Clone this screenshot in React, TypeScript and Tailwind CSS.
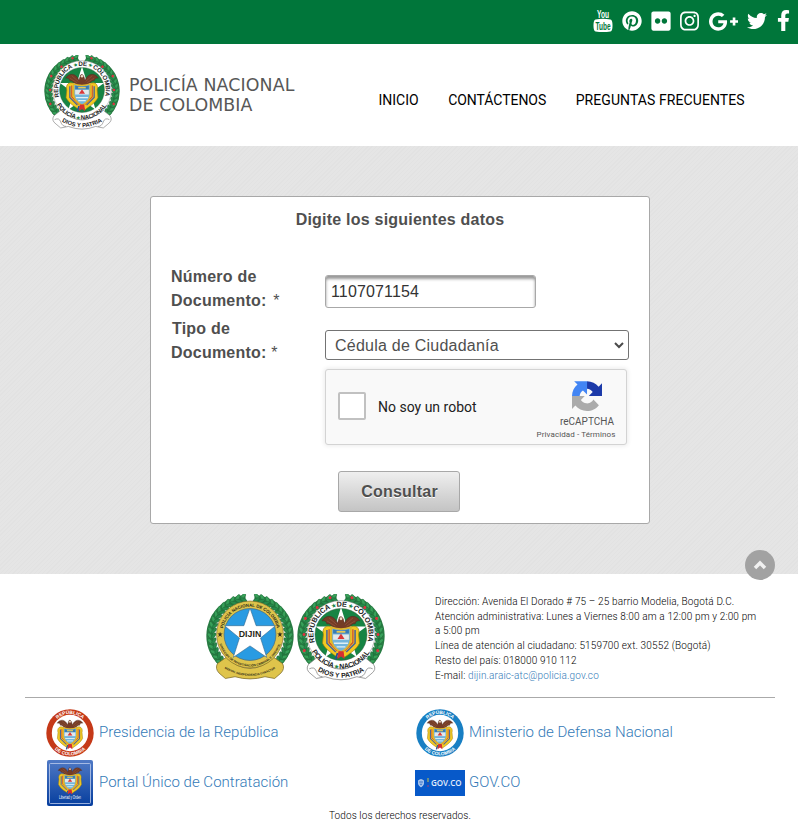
import React from 'react';
import { FaPinterest, FaFlickr, FaInstagram, FaTwitter, FaFacebookF } from 'react-icons/fa';

const deg = Math.PI / 180;

/* Condor, flags and shield, drawn around (0,0) in a 60-unit box */
function CoatOfArms() {
  return (
    <g>
      <g transform="translate(0 -1) scale(.8 .85)">
        <path d="M-5 -14C-10 -25 -21 -26 -27 -17C-23 -18 -21 -16 -20 -13C-16 -14 -15 -11 -12 -9L-5 -5H5L12 -9C15 -11 16 -14 20 -13C21 -16 23 -18 27 -17C21 -26 10 -25 5 -14L3 -20C1 -24 -3 -23 -3 -20Z" fill="#743c26" stroke="#4b2a20" strokeWidth=".7" />
        <path d="M-20 -17L-8 -10M-17 -21L-6 -12M20 -17L8 -10M17 -21L6 -12" stroke="#95583f" strokeWidth="1" />
        <circle cx="0" cy="-20" r="2" fill="#f1ddc8" />
      </g>
      <path d="M-10 -8C-17 -12 -22 -7 -20 0L-21 10C-17 18 -9 22 -4 26L0 20L-9 12Z" fill="#f2c922" stroke="#9f7d0c" strokeWidth=".8" />
      <path d="M10 -8C17 -12 22 -7 20 0L21 10C17 18 9 22 4 26L0 20L9 12Z" fill="#f2c922" stroke="#9f7d0c" strokeWidth=".8" />
      <path d="M-16 -5L-16 10L-6 20M16 -5L16 10L6 20" fill="none" stroke="#46609b" strokeWidth="1.7" />
      <path d="M-13.500 -6L-13.500 9L-4 19M13.500 -6L13.500 9L4 19" fill="none" stroke="#cc4a32" strokeWidth="1.4" />
      <path d="M-11 -8Q0 -4 11 -8V6Q10 15 0 20Q-10 15 -11 6Z" fill="#73b5dc" stroke="#dfb52b" strokeWidth="2" />
      <path d="M-9 -6Q0 -3 9 -6V-1H-9Z" fill="#387bb5" />
      <path d="M-5 -3H5" stroke="#e5ca5a" strokeWidth="2" />
      <path d="M-9 0H9V6H-9Z" fill="#e3e9ea" />
      <path d="M-4 5L0 -1L4 5Z" fill="#d9373a" />
      <path d="M-8 10L8 10M-5 14H5" stroke="#dff0f5" strokeWidth="1.5" />
      <path d="M-3 19L-4 28L0 25L4 28L3 19Z" fill="#d52f31" />
      <path d="M-4 21L-6 28" stroke="#234da0" strokeWidth="2" />
    </g>
  );
}

function Wreath({ berries }: { berries: boolean }) {
  const angles = Array.from({ length: 19 }, (_, i) => 8 + i * 8);
  return (
    <g>
      {[-1, 1].map((side) => (
        <g key={side}>
          <path d={side < 0 ? 'M45 5A42.5 42.5 0 0 0 27 85' : 'M55 5A42.5 42.5 0 0 1 73 85'} fill="none" stroke="#2a7d45" strokeWidth="8" />
          {angles.map((a, i) => {
            const x = 50 + side * Math.sin(a * deg) * 43.5;
            const y = 47.5 - Math.cos(a * deg) * 43.5;
            return (
              <g key={a} transform={`translate(${x} ${y}) rotate(${side * a})`}>
                <ellipse cx="0" cy="-2.5" rx="4.2" ry="1.9" transform={`rotate(${side * 42})`} fill="#38a15a" stroke="#1b6232" strokeWidth=".5" />
                <ellipse cx="0" cy="2.5" rx="4" ry="1.8" transform={`rotate(${side * -35})`} fill="#278a4b" stroke="#1b6232" strokeWidth=".5" />
                {berries && i % 3 === 1 && <circle r="1.7" fill="#df3140" cy={i % 2 ? -1.5 : 1.5} />}
              </g>
            );
          })}
        </g>
      ))}
    </g>
  );
}

function PoliceSeal({ id, className }: { id: string; className: string }) {
  return (
    <svg viewBox="0 0 100 100" className={className} role="img">
      <Wreath berries />
      <path d="M13 80L23 72Q50 99 77 72L87 80Q91 86 84 91L78 96L68 94Q50 101 32 94L22 96L16 91Q9 86 13 80Z" fill="#fff" stroke="#777" strokeWidth=".8" />
      <path d="M14 85Q20 82 22 88T29 94M86 85Q80 82 78 88T71 94" fill="none" stroke="#777" strokeWidth=".8" />
      <circle cx="50" cy="46" r="38.5" fill="#fff" stroke="#8a8a8a" strokeWidth=".6" />
      <circle cx="50" cy="46" r="29.5" fill="#168443" stroke="#315b3d" strokeWidth=".6" />
      <path d="M50 15L56.8 37L79 37L61 50L68 72L50 59L32 72L39 50L21 37L43.2 37Z" fill="#fff" />
      <g transform="translate(50 46)"><CoatOfArms /></g>
      <path id={`${id}-top`} d="M20.5 56A31.3 31.3 0 1 1 79.5 56" fill="none" />
      <path id={`${id}-bottom`} d="M14 59A38 38 0 0 0 86 59" fill="none" />
      <path id={`${id}-motto`} d="M21 86Q50 104 79 86" fill="none" />
      <g fontFamily="Liberation Sans, sans-serif" fontWeight="bold" fill="#222">
        <text fontSize="8.2" textLength="116"><textPath href={`#${id}-top`} startOffset="1">REPÚBLICA<tspan fill="#168443" fontSize="6"> ★ </tspan>DE<tspan fill="#168443" fontSize="6"> ★ </tspan>COLOMBIA</textPath></text>
        <text fontSize="8" textLength="79"><textPath href={`#${id}-bottom`} startOffset="7">POLICÍA<tspan fill="#168443" fontSize="6"> ★ </tspan>NACIONAL</textPath></text>
        <text fontSize="7.8"><textPath href={`#${id}-motto`} startOffset="50%" textAnchor="middle">DIOS Y PATRIA</textPath></text>
      </g>
    </svg>
  );
}

function DijinSeal() {
  return (
    <svg viewBox="0 0 100 100" className="h-[88px] w-[88px]" role="img">
      <Wreath berries={false} />
      <path d="M13 79L23 72Q50 97 77 72L87 79Q90 85 85 90L78 96L67 94Q50 99 33 94L22 96L15 90Q10 85 13 79Z" fill="#dfc44b" stroke="#74621f" strokeWidth=".8" />
      <circle cx="50" cy="46" r="38" fill="#dfc44b" stroke="#766525" strokeWidth=".7" />
      <circle cx="50" cy="46" r="29.5" fill="#299be2" stroke="#4e6a76" strokeWidth=".8" />
      <path d="M50 16L57 36L79 36L62 50L69 72L50 59L31 72L38 50L21 36L43 36Z" fill="#fff" stroke="#35698e" strokeWidth=".7" />
      <path id="dijin-top" d="M18.5 46A31.5 31.5 0 0 1 81.5 46" fill="none" />
      <path id="dijin-bottom" d="M14.6 54A36.3 36.3 0 0 0 85.4 54" fill="none" />
      <path id="dijin-motto" d="M20 84Q50 102 80 84" fill="none" />
      <g fontFamily="Liberation Sans, sans-serif" fontWeight="bold" fill="#292816">
        <text x="50" y="48.5" textAnchor="middle" fontSize="10">DIJIN</text>
        <text fontSize="5"><textPath href="#dijin-top" startOffset="50%" textAnchor="middle">POLICÍA NACIONAL DE COLOMBIA</textPath></text>
        <text fontSize="3.4"><textPath href="#dijin-bottom" startOffset="50%" textAnchor="middle">DIRECCIÓN DE INVESTIGACIÓN CRIMINAL E INTERPOL</textPath></text>
        <text fontSize="3.3"><textPath href="#dijin-motto" startOffset="50%" textAnchor="middle">MENTAL INDEPENDENCIA CARÁCTER</textPath></text>
      </g>
      <path d="M13 45h6l-5 4 2-6 2 6zM81 45h6l-5 4 2-6 2 6z" fill="#29251a" />
    </svg>
  );
}

function RepublicSeal({ color, id }: { color: string; id: string }) {
  return (
    <svg viewBox="0 0 48 48" className="h-12 w-12" role="img">
      <circle cx="24" cy="24" r="23.7" fill={color} />
      <circle cx="24" cy="24" r="18.2" fill="#fff" />
      <g transform="translate(24 23.5) scale(.6)"><CoatOfArms /></g>
      <path id={`${id}-a`} d="M5 24A19 19 0 0 1 43 24" fill="none" />
      <path id={`${id}-b`} d="M1.6 24A22.4 22.4 0 0 0 46.4 24" fill="none" />
      <g fill="white" fontFamily="Liberation Sans, sans-serif" fontWeight="bold" fontSize="4.8">
        <text><textPath href={`#${id}-a`} startOffset="50%" textAnchor="middle">REPÚBLICA</textPath></text>
        <text><textPath href={`#${id}-b`} startOffset="50%" textAnchor="middle">DE COLOMBIA</textPath></text>
      </g>
    </svg>
  );
}

function ContractLogo() {
  return (
    <svg viewBox="0 0 46 46" className="h-[46px] w-[46px]" role="img">
      <defs><linearGradient id="contract" x2="0" y2="1"><stop stopColor="#4f79c5" /><stop offset="1" stopColor="#063e9e" /></linearGradient></defs>
      <rect width="46" height="46" rx="2" fill="url(#contract)" />
      <rect x="2.5" y="3.5" width="41" height="40" rx="1" fill="none" stroke="#bdccec" strokeWidth=".8" />
      <g transform="translate(23 19) scale(.55)"><CoatOfArms /></g>
      <text x="12" y="38.5" fill="#fff" fontFamily="Liberation Sans, sans-serif" fontSize="4.6" textLength="22" lengthAdjust="spacingAndGlyphs">Libertad y Orden</text>
    </svg>
  );
}

function GovLogo() {
  return (
    <svg viewBox="0 0 50 26" className="h-[26px] w-[50px]" role="img">
      <path d="M0 0H50V26H0Z" fill="#0759c9" />
      <path d="M3.5 10.5Q6 8.5 8.5 10.5V14Q8 16 6 17Q4 16 3.5 14Z" fill="#9bbbe9" stroke="#d9e7fa" strokeWidth=".6" />
      <path d="M4.3 12h3.6M5 14.3h2" stroke="#2868c1" strokeWidth=".8" />
      <path d="M13 8v4" stroke="#c7c34c" />
      <path d="M13 12v2" stroke="#264eaa" />
      <path d="M13 15v2" stroke="#b53e6e" />
      <text x="16" y="16" fill="#e3edfc" fontFamily="Open Sans, sans-serif" fontWeight="600" fontSize="8" textLength="30.5">GOV.CO</text>
    </svg>
  );
}

function YouTubeIcon() {
  return (
    <svg viewBox="0 -3 20 29" className="-mt-[3px] mr-[9px] h-[29px] w-5 shrink-0 overflow-visible" role="img">
      <path d="M2.5 10.5Q10 9 17.5 10.5Q19.5 11 19.5 16.5Q19.5 22 17.5 22.5Q10 23.6 2.5 22.5Q.5 22 .5 16.5Q.5 11 2.5 10.5Z" fill="#fff" />
      <g fontFamily="Liberation Sans, sans-serif" fontWeight="bold">
        <text x="4" y="8.5" fontSize="10.5" fill="#fff" textLength="12" lengthAdjust="spacingAndGlyphs">You</text>
        <text x="2.5" y="20.5" fontSize="10.5" fill="#00763a" textLength="15" lengthAdjust="spacingAndGlyphs">Tube</text>
      </g>
    </svg>
  );
}

function GooglePlusIcon() {
  return (
    <svg viewBox="0 164 2304 1466" className="mt-[3px] mr-[9px] ml-px h-[19px] w-[29px] shrink-0" fill="currentColor" role="img">
      <path d="M1437 913q0 208-87 370.500T1102 1538 733 1630q-149 0-285-58T214 1416 58 1182 0 897 58 612 214 378 448 222 733 164q286 0 491 192L1025 547Q908 434 733 434q-123 0-227.500 62T340 664.500 279 897t61 232.500T505.500 1298 733 1360q83 0 152.500-23t114.500-57.500 78.500-78.500 49-83 21.500-74H733V792h692q12 63 12 121zm867-121v210h-209v209h-210v-209h-209V792h209V583h210v209h209z" />
    </svg>
  );
}

function CaptchaLogo() {
  return (
    <svg viewBox="0 0 64 70" className="h-[33px] w-[30px]" role="img">
      <path d="M64 31.955a33 33 0 0 0-.033-1.37V4.687l-7.16 7.16C50.948 4.674 42.033.093 32.05.093V16.350c5.200.300 9.600 3.140 12.100 7.124l-8.307 8.481H64" fill="#1c3aa9" />
      <path d="M32.050.094H4.594l7.160 7.160C4.580 13.147 0 22.060 0 32.046H16.260c.300-5.200 3.140-9.600 7.124-12l8.666 8.307V.095" fill="#4285f4" />
      <path d="M.001 32.045v27.268l7.160-7.160c5.860 7.173 14.774 11.754 24.760 11.754 10.400 0 19.622-4.960 25.458-12.640l-11.736-11.860a15.550 15.550 0 0 1-4.754 5.334c-2.050 1.600-4.952 2.906-8.968 2.906-.485 0-.860-.057-1.135-.163-4.976-.393-9.288-3.140-11.828-7.124l8.307-8.307-27.297.001" fill="#ababab" />
    </svg>
  );
}

export default function App() {
  return (
    <div className="h-[833px] w-[798px] overflow-hidden bg-white font-['Roboto',sans-serif] text-black">
      <div className="flex h-11 items-start bg-[#00763a] pt-[9px] pl-[593px] text-white">
        <YouTubeIcon />
        <FaPinterest className="mt-[2px] mr-[9px] h-5 w-5 shrink-0" />
        <FaFlickr className="mt-[1px] mr-[9px] h-[22px] w-5 shrink-0" />
        <FaInstagram className="mt-[1px] mr-[9px] h-[22px] w-[19px] shrink-0" />
        <GooglePlusIcon />
        <FaTwitter className="mt-[2px] mr-[10px] h-5 w-5 shrink-0" />
        <FaFacebookF className="mt-[1px] h-[21px] w-[13px] shrink-0" />
      </div>
      <header className="flex h-[102px]">
        <PoliceSeal id="header" className="mt-[11px] ml-11 h-[76px] w-[76px] shrink-0" />
        <div className="mt-[31px] ml-[9px] w-[249.5px] shrink-0 font-['DejaVu_Sans',sans-serif] text-[17.4px] leading-[20px] tracking-[0.1px] text-[#575757]">
          <div className="whitespace-nowrap">POLICÍA NACIONAL</div>
          <div className="whitespace-nowrap">DE COLOMBIA</div>
        </div>
        <nav className="mt-[46px] flex items-start gap-[29.5px] text-sm leading-5 whitespace-nowrap">
          <a>INICIO</a><a className="tracking-[-0.05px]">CONTÁCTENOS</a><a className="tracking-[0.08px]">PREGUNTAS FRECUENTES</a>
        </nav>
      </header>
      <main className="relative h-[428px] bg-[repeating-linear-gradient(135deg,#e5e5e5_0px,#e5e5e5_2px,#e2e2e2_2px,#e2e2e2_3px)] pt-[50px] pl-[150px]">
        <form className="h-[328px] w-[500px] rounded-[3px] border border-[#a8a8a8] bg-white font-['Liberation_Sans',Arial,sans-serif] text-base text-[#4f4f4f]">
          <h1 className="mt-[11px] h-[57px] text-center leading-6 font-bold tracking-[0.22px]">Digite los siguientes datos</h1>
          <div className="flex h-[60px] pl-5">
            <label className="w-[154px] leading-6 font-bold tracking-[0.22px]">Número de<br />Documento: <span className="ml-[2px] font-normal">*</span></label>
            <input defaultValue="1107071154" className="mt-[10px] h-[33px] w-[211px] rounded-[3px] border border-[#a8a8a8] bg-white px-[5px] pt-px tracking-[0.15px] text-[#333] shadow-[inset_0_3px_3px_#999] outline-none" />
          </div>
          <div className="flex h-[44px] pl-5">
            <label className="-mt-[8px] w-[154px] leading-6 font-bold tracking-[0.22px]"><span className="pl-px">Tipo de</span><br />Documento: <span className="font-normal">*</span></label>
            <div className="mt-[5px] flex h-[30px] w-[304px] items-center justify-between rounded-[3px] border border-[#737373] pr-1 pl-[9px]">
              <span className="pt-px text-base tracking-[0.23px]">Cédula de Ciudadanía</span>
              <svg width="10" height="7" viewBox="0 0 10 7"><path d="M1 1l4 4 4-4" fill="none" stroke="#4b4b4b" strokeWidth="2" /></svg>
            </div>
          </div>
          <div className="ml-[174px] flex h-[76px] w-[302px] rounded-[3px] border border-[#d3d3d3] bg-[#f9f9f9] font-['Roboto',sans-serif] shadow-[0_0_4px_1px_rgba(0,0,0,.08)]">
            <div className="mt-[22px] ml-3 h-7 w-7 rounded-[2px] border-2 border-[#c1c1c1] bg-white" />
            <span className="mt-[27px] ml-3 w-[158px] text-sm leading-5 text-[#222]">No soy un robot</span>
            <div className="flex w-20 flex-col items-center pt-[11px] text-[#555]">
              <div className="ml-[22px]"><CaptchaLogo /></div>
              <span className="mt-[1px] ml-[22px] text-[10px] leading-[13px] whitespace-nowrap">reCAPTCHA</span>
              <span className="text-[8px] leading-[13px] tracking-[0.1px] whitespace-nowrap">Privacidad - Términos</span>
            </div>
          </div>
          <button type="button" className="mt-[26px] ml-[187px] h-[41px] w-[122px] rounded-[3px] border border-[#a8a8a8] bg-linear-to-b from-[#efefef] to-[#c4c4c4] pl-px font-bold tracking-[0.22px] [text-shadow:0_1px_0_white]">Consultar</button>
        </form>
        <div className="absolute top-[404px] left-[745px] flex h-[30px] w-[30px] items-center justify-center rounded-full bg-[#a2a2a2]">
          <svg width="14" height="10" viewBox="0 0 14 10"><path d="M2 8l5-5 5 5" fill="none" stroke="#f1f1f1" strokeWidth="3.5" /></svg>
        </div>
      </main>
      <footer className="pr-[23px] pl-[25px]">
        <div className="flex h-[124px] border-b border-[#aaa] pt-5 pl-[181px] font-light">
          <DijinSeal />
          <PoliceSeal id="footer" className="ml-[3px] h-[88px] w-[88px]" />
          <address className="mt-[1px] ml-[50px] text-[10px] leading-[14.7px] tracking-[0.145px] whitespace-nowrap not-italic">
            Dirección: Avenida El Dorado # 75 – 25 barrio Modelia, Bogotá D.C.<br />
            Atención administrativa: Lunes a Viernes 8:00 am a 12:00 pm y 2:00 pm<br />
            a 5:00 pm<br />
            Línea de atención al ciudadano: 5159700 ext. 30552 (Bogotá)<br />
            Resto del país: 018000 910 112<br />
            E-mail: <a className="text-[#337ab7]">dijin.araic-atc@policia.gov.co</a>
          </address>
        </div>
        <div className="grid h-[110px] grid-cols-[370px_1fr] grid-rows-[50px_50px] pt-[10px] pl-[21px] text-[15px] font-light text-[#337ab7]">
          <a className="flex items-center gap-[5px]"><RepublicSeal color="#c53918" id="presidency" /><span className="-mt-[2px]">Presidencia de la República</span></a>
          <a className="flex items-center gap-[5px]"><RepublicSeal color="#187fc3" id="defense" /><span className="-mt-[2px]">Ministerio de Defensa Nacional</span></a>
          <a className="flex items-center gap-[6px] pl-px"><ContractLogo /><span className="-mt-[2px] tracking-[0.03px]">Portal Único de Contratación</span></a>
          <a className="-ml-px flex items-center gap-1"><GovLogo /><span className="-mt-[2px]">GOV.CO</span></a>
        </div>
        <p className="pl-[304px] text-[10px] leading-[15px] font-light tracking-[0.1px]">Todos los derechos reservados.</p>
      </footer>
    </div>
  );
}
